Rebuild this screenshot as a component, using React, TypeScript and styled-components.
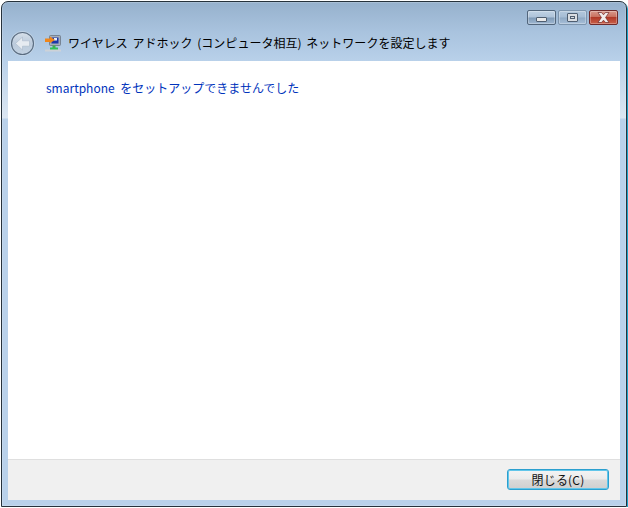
import React from "react";
import styled, { createGlobalStyle } from "styled-components";

const Global = createGlobalStyle`
  html, body { margin: 0; padding: 0; background: #fff; }
  body { font-family: "Noto Sans CJK JP", "Noto Sans", sans-serif; }
`;

const Frame = styled.div`
  box-sizing: border-box;
  width: 626px;
  height: 506px;
  margin: 1px 0 0 1px;
  display: flex;
  flex-direction: column;
  padding: 0 6px 6px;
  border: 1px solid #26323c;
  border-radius: 7px 7px 0 0;
  box-shadow: 1px 1px 0 #1ea3c9, inset 0 0 0 1px rgba(255, 255, 255, 0.18);
  background: linear-gradient(
    180deg,
    #96b1cd 0px,
    #a9c3de 30px,
    #b9d1ea 60px,
    #c6d9ec 80px,
    #dbe6f2 116px,
    #b9d1ea 117px,
    #b9d1ea 100%
  );
`;

const Controls = styled.div`
  display: flex;
  justify-content: flex-end;
  gap: 2px;
  height: 15px;
  padding: 8px 2px 0 0;
`;

const Control = styled.div<{ $variant?: "close" | "max" }>`
  box-sizing: border-box;
  width: 29px;
  height: 15px;
  display: flex;
  align-items: center;
  justify-content: center;
  border-radius: 2px;
  border: 1px solid ${(p) => (p.$variant === "close" ? "#6f2a2a" : p.$variant === "max" ? "#7d95ae" : "#52667c")};
  background: ${(p) =>
    p.$variant === "close"
      ? "linear-gradient(180deg, #d99a8c 0%, #c9705e 45%, #b13a28 50%, #c9604a 100%)"
      : p.$variant === "max"
      ? "linear-gradient(180deg, #b3c8dd 0%, #a5bcd4 48%, #8fa9c4 52%, #a7bfd8 100%)"
      : "linear-gradient(180deg, #c0d2e4 0%, #aec3d9 48%, #7f9ab6 52%, #9fb8d2 100%)"};
  box-shadow: inset 0 0 0 1px rgba(255, 255, 255, 0.28);
`;

const MinGlyph = styled.div`
  box-sizing: border-box;
  width: 11px;
  height: 5px;
  margin-top: 3px;
  border: 1px solid #4f5e70;
  border-radius: 1px;
  background: #e9e9e9;
`;

const MaxGlyph = styled.div`
  box-sizing: border-box;
  width: 11px;
  height: 9px;
  border: 1px solid #4f5e70;
  border-radius: 1px;
  background: #d9dde2;
  display: flex;
  align-items: center;
  justify-content: center;
  &::after {
    content: "";
    display: block;
    width: 5px;
    height: 3px;
    box-sizing: border-box;
    border: 1px solid #4f5e70;
  }
`;

const NavBar = styled.div`
  display: flex;
  align-items: center;
  height: 36px;
  box-sizing: border-box;
  padding: 1px 0 0 2px;
`;

const BackSlot = styled.div`
  width: 25px;
  height: 25px;
  display: flex;
  margin-right: 10px;
`;

const IconSlot = styled.div`
  width: 16px;
  height: 17px;
  display: flex;
  margin-right: 7px;
`;

const Title = styled.div`
  font-size: 12px;
  line-height: 16px;
  color: #000;
  white-space: nowrap;
  letter-spacing: 0.02px;
  word-spacing: 2px;
  margin-top: -1px;
`;

const Panel = styled.div`
  flex: 1;
  display: flex;
  flex-direction: column;
  background: #fff;
  min-height: 0;
`;

const Content = styled.div`
  flex: 1;
  padding: 18px 0 0 38px;
`;

const Heading = styled.div`
  font-size: 12px;
  line-height: 18px;
  color: #0033bc;
  white-space: nowrap;
  word-spacing: 3px;
`;

const Footer = styled.div`
  box-sizing: border-box;
  height: 41px;
  background: #f0f0f0;
  border-top: 1px solid #dfdfdf;
  display: flex;
  justify-content: flex-end;
  align-items: flex-start;
  padding: 9px 11px 0 0;
`;

const CloseButton = styled.button`
  box-sizing: border-box;
  width: 102px;
  height: 21px;
  padding: 0;
  border: 1px solid #2b9fcf;
  border-radius: 3px;
  background: linear-gradient(180deg, #f4f4f4 0%, #ebebeb 48%, #dadada 52%, #cfcfcf 100%);
  box-shadow: inset 0 0 0 1px #62c6ea;
  font-family: inherit;
  font-size: 12px;
  line-height: 17px;
  letter-spacing: 0.2px;
  color: #111;
`;

const BackIcon = () => (
  <svg width="25" height="25" viewBox="0 0 25 25">
    <defs>
      <linearGradient id="bk" x1="0" y1="0" x2="0" y2="1">
        <stop offset="0" stopColor="#d6e0ea" />
        <stop offset="0.5" stopColor="#bccbdc" />
        <stop offset="1" stopColor="#c3d2e2" />
      </linearGradient>
    </defs>
    <circle cx="12.5" cy="12.5" r="12.5" fill="#c9d8e8" opacity="0.7" />
    <circle cx="12.5" cy="12.5" r="11" fill="url(#bk)" stroke="#5a6c80" strokeWidth="1.1" />
    <path d="M5.5 12.5 L12.5 6 V9.8 H19.5 V15.2 H12.5 V19 Z" fill="#e6ebf1" stroke="#a9b8c9" strokeWidth="0.6" strokeLinejoin="round" />
  </svg>
);

const NetIcon = () => (
  <svg width="16" height="17" viewBox="0 0 16 17">
    <rect x="4.5" y="0.5" width="11" height="10" rx="1" fill="#a4aeba" stroke="#6b7685" strokeWidth="0.8" />
    <rect x="6.5" y="2.5" width="7" height="6" fill="#1c37a8" />
    <rect x="9" y="3" width="3" height="2.5" fill="#e8eef8" />
    <path d="M0 3.5 H5 V1.5 L10 5 L5 8 V7 H0 Z" fill="#f0861a" />
    <rect x="7.5" y="10.5" width="3" height="3" fill="#3fb24a" />
    <rect x="5" y="12.5" width="8" height="2.5" fill="#2fc05a" />
    <rect x="0" y="14.5" width="16" height="2" fill="#cdd2d8" />
  </svg>
);

const CloseGlyph = () => (
  <svg width="15" height="11" viewBox="0 0 15 11">
    <path
      d="M2 0.5 H5.5 L7.5 2.8 L9.5 0.5 H13 L9.6 5.5 L13 10.5 H9.5 L7.5 8.2 L5.5 10.5 H2 L5.4 5.5 Z"
      fill="#f1ecea"
      stroke="#6f2a2a"
      strokeWidth="0.7"
    />
  </svg>
);

export default function App() {
  return (
    <>
      <Global />
      <Frame>
        <Controls>
          <Control>
            <MinGlyph />
          </Control>
          <Control $variant="max">
            <MaxGlyph />
          </Control>
          <Control $variant="close">
            <CloseGlyph />
          </Control>
        </Controls>
        <NavBar>
          <BackSlot>
            <BackIcon />
          </BackSlot>
          <IconSlot>
            <NetIcon />
          </IconSlot>
          <Title>ワイヤレス アドホック (コンピュータ相互) ネットワークを設定します</Title>
        </NavBar>
        <Panel>
          <Content>
            <Heading>smartphone をセットアップできませんでした</Heading>
          </Content>
          <Footer>
            <CloseButton>閉じる(C)</CloseButton>
          </Footer>
        </Panel>
      </Frame>
    </>
  );
}
